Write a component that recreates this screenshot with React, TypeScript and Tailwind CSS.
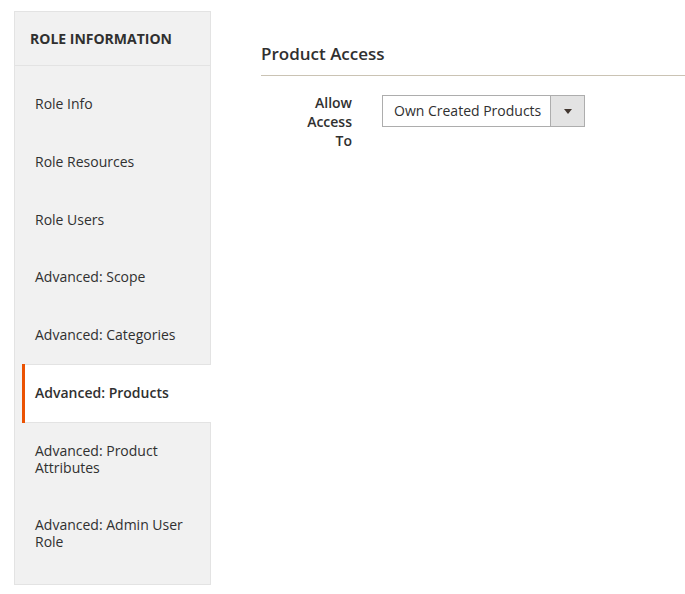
import React from "react";

const items: { label: string; active?: boolean }[] = [
  { label: "Role Info" },
  { label: "Role Resources" },
  { label: "Role Users" },
  { label: "Advanced: Scope" },
  { label: "Advanced: Categories" },
  { label: "Advanced: Products", active: true },
  { label: "Advanced: Product Attributes" },
  { label: "Advanced: Admin User Role" },
];

export default function App() {
  return (
    <div
      className="min-h-[594px] w-[685px] overflow-hidden bg-white text-[#303030]"
      style={{ fontFamily: '"Open Sans", "Noto Sans", sans-serif' }}
    >
      <div className="flex items-start pl-[14px] pt-[11px]">
        <div className="w-[197px] shrink-0 border border-[#e3e3e3] bg-[#f1f1f1]">
          <div className="mb-[-1px] border-b border-[#e3e3e3] px-[15px] py-[18px] text-[14px] font-bold uppercase leading-[17px]">
            Role Information
          </div>
          <ul className="pb-[13px] pt-[10px]">
            {items.map((it) => (
              <li
                key={it.label}
                className={
                  "ml-[7px] border-l-[3px] " +
                  (it.active ? "border-l-[#eb5202]" : "border-l-transparent")
                }
              >
                <a
                  className={
                    "mb-[-1px] block border-y py-[20px] pl-[10px] pr-[16px] text-[14px] leading-[16.8px] " +
                    (it.active
                      ? "mr-[-1px] border-[#e3e3e3] bg-white font-semibold"
                      : "border-transparent")
                  }
                >
                  {it.label}
                </a>
              </li>
            ))}
          </ul>
        </div>
        <div className="ml-[50px] flex-1 pt-[32px]">
          <div className="border-b border-[#cac3b4] pb-[10px] text-[17px] font-semibold leading-[22px]">
            Product Access
          </div>
          <div className="mt-[19px] flex items-start">
            <div className="mt-[-2px] w-[91px] text-right text-[14px] font-semibold leading-[19px]">
              Allow
              <br />
              Access
              <br />
              To
            </div>
            <div className="ml-[30px] flex h-[32px] w-[203px] border border-[#adadad] bg-white">
              <div className="flex flex-1 items-center pb-[1px] pl-[11px] text-[14px]">
                Own Created Products
              </div>
              <div className="flex w-[34px] items-center justify-center border-l border-[#adadad] bg-[#e3e3e3]">
                <svg width="8" height="5" viewBox="0 0 8 5">
                  <polygon points="0,0 8,0 4,5" fill="#41362f" />
                </svg>
              </div>
            </div>
          </div>
        </div>
      </div>
    </div>
  );
}
